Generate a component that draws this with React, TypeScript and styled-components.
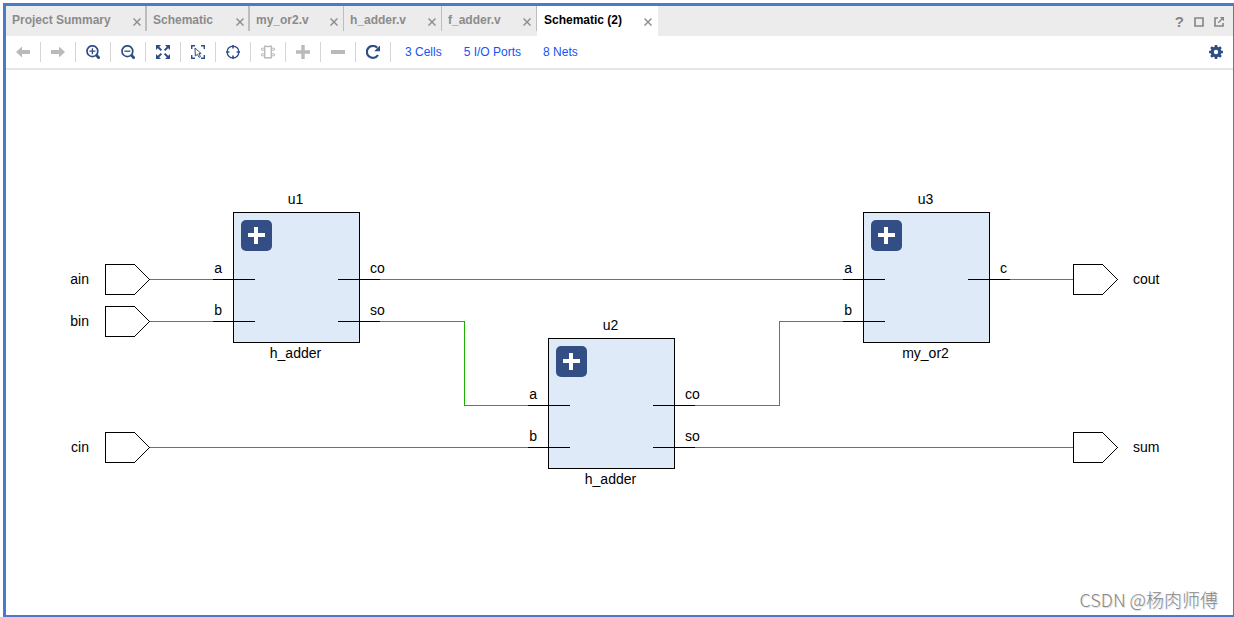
import React from "react";
import styled, { createGlobalStyle } from "styled-components";

const NAVY = "#2f4d86";
const DISABLED = "#bababa";
const WIRE = "#19b000";

const GlobalStyle = createGlobalStyle`
  * { box-sizing: border-box; }
  body {
    margin: 0;
    background: #fff;
    font-family: "Liberation Sans", Arial, sans-serif;
  }
  button {
    margin: 0;
    padding: 0;
    border: 0;
    background: none;
    font: inherit;
    color: inherit;
    cursor: pointer;
  }
  svg { display: block; }
`;

const Page = styled.div`
  display: flex;
  min-height: 100vh;
  padding: 3px 0 0 3px;
`;

const Frame = styled.main`
  flex: 1;
  min-width: 0;
  display: flex;
  flex-direction: column;
  border: 3px solid #4a7bca;
  border-right-width: 1px;
  border-bottom-width: 2px;
`;

const TabBar = styled.header`
  display: flex;
  justify-content: space-between;
  height: 30px;
  background: #ececec;
`;

const TabList = styled.nav`
  display: flex;
`;

const Tab = styled.div<{ $width: number; $divider: number; $active?: boolean }>`
  display: flex;
  align-items: center;
  justify-content: space-between;
  width: ${(p) => p.$width}px;
  padding: 0 6px 2px ${(p) => (p.$active ? 7 : 6)}px;
  color: ${(p) => (p.$active ? "#000" : "#8b8b8b")};
  background: ${(p) =>
    p.$active
      ? "#fff"
      : `linear-gradient(#bdbdbd, #bdbdbd) right top / ${p.$divider}px 25px no-repeat`};
`;

const TabTitle = styled.button`
  font-size: 12px;
  line-height: 16px;
  font-weight: bold;
  white-space: nowrap;
`;

const CloseButton = styled.button`
  padding-top: 4px;
  color: #8f8f8f;
`;

const WindowActions = styled.div`
  display: flex;
  align-items: center;
  gap: 10px;
  padding: 2px 9px 0 0;
  color: #858585;
`;

const HelpButton = styled.button`
  font-size: 15px;
  line-height: 16px;
  font-weight: bold;
`;

const Toolbar = styled.div`
  display: flex;
  align-items: center;
  height: 34px;
  border-bottom: 2px solid #e5e5e5;
`;

const Tool = styled.button`
  display: flex;
  align-items: center;
  justify-content: center;
  width: 35px;
  height: 20px;
  border-right: 1px solid #d6d6d6;
  color: ${NAVY};
  &:disabled {
    color: ${DISABLED};
    cursor: default;
  }
`;

const Stats = styled.div`
  display: flex;
  gap: 22px;
  padding-left: 14px;
`;

const StatLink = styled.a`
  font-size: 12px;
  line-height: 16px;
  color: #1453f5;
  text-decoration: none;
`;

const SettingsButton = styled.button`
  margin-left: auto;
  padding-right: 10px;
  color: ${NAVY};
`;

const Canvas = styled.section`
  position: relative;
  flex: 1;
  min-height: 440px;
  overflow: hidden;
  font-size: 14px;
  line-height: 16px;
  color: #000;
`;

const Wires = styled.svg`
  position: absolute;
  left: 0;
  top: 0;
  width: 100%;
  height: 100%;
`;

const CellBox = styled.div<{ $x: number; $y: number }>`
  position: absolute;
  left: ${(p) => p.$x}px;
  top: ${(p) => p.$y}px;
  width: 127px;
  height: 131px;
  border: 1px solid #000;
  background: #dfeaf8;
`;

const ExpandButton = styled.button`
  display: flex;
  align-items: center;
  justify-content: center;
  width: 31px;
  height: 31px;
  margin: 7px;
  border-radius: 5px;
  background: #324e85;
`;

const CellLabel = styled.span<{ $place: "above" | "below" }>`
  position: absolute;
  left: 0;
  right: 2px;
  ${(p) => (p.$place === "above" ? "bottom: 135px;" : "top: 132px;")}
  text-align: center;
`;

const Pin = styled.span<{ $side: "in" | "out"; $y: number }>`
  position: absolute;
  top: ${(p) => p.$y - 20}px;
  ${(p) => (p.$side === "in" ? "left: -21px;" : "right: -21px;")}
  width: 42px;
  height: 20px;
  border-bottom: 1px solid #000;
`;

const PinName = styled.span<{ $side: "in" | "out" }>`
  position: absolute;
  bottom: 3px;
  ${(p) => (p.$side === "in" ? "right: 33px;" : "left: 32px;")}
`;

const Port = styled.div<{ $x: number; $y: number; $side: "in" | "out" }>`
  position: absolute;
  top: ${(p) => p.$y}px;
  left: ${(p) => p.$x}px;
  display: flex;
  flex-direction: ${(p) => (p.$side === "in" ? "row" : "row-reverse")};
  justify-content: flex-end;
  gap: ${(p) => (p.$side === "in" ? 16 : 15)}px;
  width: 96px;
  line-height: 30px;
  white-space: nowrap;
`;

const Watermark = styled.p`
  position: absolute;
  right: 15px;
  bottom: 4px;
  margin: 0;
  font-family: "Noto Sans CJK SC", sans-serif;
  font-size: 18px;
  line-height: 24px;
  font-weight: 300;
  color: #888;
  text-shadow: 1px 1px 1px #d8d8d8;
`;

const Icon = ({ size = 14, children }: { size?: number; children: React.ReactNode }) => (
  <svg
    width={size}
    height={size}
    viewBox={`0 0 ${size} ${size}`}
    fill="none"
    stroke="currentColor"
    aria-hidden="true"
  >
    {children}
  </svg>
);

const CloseIcon = () => (
  <Icon size={8}>
    <path d="M.5.5l7 7M7.5.5l-7 7" strokeWidth="1.5" />
  </Icon>
);

const tools = [
  {
    label: "Previous",
    disabled: true,
    icon: <path d="M0 7l6-5.5V5h8v4H6v3.5z" fill="currentColor" stroke="none" />,
  },
  {
    label: "Next",
    disabled: true,
    icon: <path d="M14 7L8 1.5V5H0v4h8v3.5z" fill="currentColor" stroke="none" />,
  },
  {
    label: "Zoom In",
    icon: (
      <>
        <circle cx="6.4" cy="6.2" r="5.4" strokeWidth="1.7" />
        <path d="M3.4 6.2h6M6.4 3.2v6" strokeWidth="1.3" />
        <path d="M10.2 10l3.4 3.6" strokeWidth="2.8" />
      </>
    ),
  },
  {
    label: "Zoom Out",
    icon: (
      <>
        <circle cx="6.4" cy="6.2" r="5.4" strokeWidth="1.7" />
        <path d="M3.4 6.2h6" strokeWidth="1.3" />
        <path d="M10.2 10l3.4 3.6" strokeWidth="2.8" />
      </>
    ),
  },
  {
    label: "Zoom Fit",
    icon: (
      <>
        <path
          d="M0 0h5L0 5zM14 0v5L9 0zM0 14V9l5 5zM14 14H9l5-5z"
          fill="currentColor"
          stroke="none"
        />
        <path d="M1.5 1.5L5.4 5.4M12.5 1.5L8.6 5.4M1.5 12.5l3.9-3.9M12.5 12.5L8.6 8.6" strokeWidth="2" />
      </>
    ),
  },
  {
    label: "Select Area",
    icon: (
      <>
        <path d="M.7 4V.7H4M10 .7h3.3V4M13.3 10v3.3H10M4 13.3H.7V10" strokeWidth="1.4" />
        <path d="M4 3l6.2 5.6H7.9l1.6 3-1.5.7-1.5-3L4.3 11z" strokeWidth="1" />
      </>
    ),
  },
  {
    label: "Auto-fit Selection",
    icon: (
      <>
        <circle cx="7" cy="7" r="5.9" strokeWidth="1.3" />
        <path d="M7 0v3.4M7 10.6V14M0 7h3.4M10.6 7H14" strokeWidth="1.6" />
      </>
    ),
  },
  {
    label: "Cell Pins",
    disabled: true,
    icon: (
      <>
        <path d="M3.7 1.2h2q1.3 1 2.6 0h2v11.6H3.7z" strokeWidth="1.4" />
        <path d="M3.5 3.2H.6v2h2.9M3.5 8.8H.6v2h2.9M10.5 3.2h2.9v2h-2.9M10.5 8.8h2.9v2h-2.9" strokeWidth="1" />
      </>
    ),
  },
  {
    label: "Add",
    disabled: true,
    icon: <path d="M7 0v14M0 7h14" strokeWidth="3.4" />,
  },
  {
    label: "Remove",
    disabled: true,
    icon: <path d="M0 7h14" strokeWidth="4" />,
  },
  {
    label: "Reload",
    icon: (
      <>
        <path d="M12 10A6 6 0 1 1 11.2 2.7" strokeWidth="2.2" />
        <path d="M14 .4v5.8H8.2z" fill="currentColor" stroke="none" />
      </>
    ),
  },
];

const tabs = [
  { title: "Project Summary", width: 141, divider: 2 },
  { title: "Schematic", width: 103, divider: 2 },
  { title: "my_or2.v", width: 94, divider: 1 },
  { title: "h_adder.v", width: 98, divider: 1 },
  { title: "f_adder.v", width: 95, divider: 1 },
  { title: "Schematic (2)", width: 121, divider: 0, active: true },
];

type PinSpec = { name: string; y: number };

const cells: {
  id: string;
  module: string;
  x: number;
  y: number;
  inputs: PinSpec[];
  outputs: PinSpec[];
}[] = [
  {
    id: "u1",
    module: "h_adder",
    x: 227,
    y: 142,
    inputs: [{ name: "a", y: 67 }, { name: "b", y: 109 }],
    outputs: [{ name: "co", y: 67 }, { name: "so", y: 109 }],
  },
  {
    id: "u2",
    module: "h_adder",
    x: 542,
    y: 268,
    inputs: [{ name: "a", y: 67 }, { name: "b", y: 109 }],
    outputs: [{ name: "co", y: 67 }, { name: "so", y: 109 }],
  },
  {
    id: "u3",
    module: "my_or2",
    x: 857,
    y: 142,
    inputs: [{ name: "a", y: 67 }, { name: "b", y: 109 }],
    outputs: [{ name: "c", y: 67 }],
  },
];

const ports: { name: string; side: "in" | "out"; x: number; y: number }[] = [
  { name: "ain", side: "in", x: 48, y: 194 },
  { name: "bin", side: "in", x: 48, y: 236 },
  { name: "cin", side: "in", x: 48, y: 362 },
  { name: "cout", side: "out", x: 1067, y: 194 },
  { name: "sum", side: "out", x: 1067, y: 362 },
];

const wires = [
  "M143 209.5H207",
  "M143 251.5H207",
  "M143 377.5H522",
  "M374 209.5H837",
  "M374 251.5H458.5V335.5H522",
  "M689 335.5H773.5V251.5H837",
  "M689 377.5H1067",
  "M1004 209.5H1067",
];

const Cell = ({ cell }: { cell: (typeof cells)[number] }) => (
  <CellBox $x={cell.x} $y={cell.y}>
    <CellLabel $place="above">{cell.id}</CellLabel>
    <ExpandButton aria-label={`Expand ${cell.id}`}>
      <svg width="17" height="17" viewBox="0 0 17 17" stroke="#fff" strokeWidth="4">
        <path d="M8 0v17M0 8h17" />
      </svg>
    </ExpandButton>
    {cell.inputs.map((pin) => (
      <Pin key={pin.name} $side="in" $y={pin.y}>
        <PinName $side="in">{pin.name}</PinName>
      </Pin>
    ))}
    {cell.outputs.map((pin) => (
      <Pin key={pin.name} $side="out" $y={pin.y}>
        <PinName $side="out">{pin.name}</PinName>
      </Pin>
    ))}
    <CellLabel $place="below">{cell.module}</CellLabel>
  </CellBox>
);

export default function App() {
  return (
    <Page>
      <GlobalStyle />
      <Frame>
        <TabBar>
          <TabList>
            {tabs.map((tab) => (
              <Tab key={tab.title} $width={tab.width} $divider={tab.divider} $active={tab.active}>
                <TabTitle>{tab.title}</TabTitle>
                <CloseButton aria-label={`Close ${tab.title}`}>
                  <CloseIcon />
                </CloseButton>
              </Tab>
            ))}
          </TabList>
          <WindowActions>
            <HelpButton aria-label="Help">?</HelpButton>
            <button aria-label="Maximize">
              <Icon size={10}>
                <path d="M1 1h8v8H1z" strokeWidth="1.6" />
              </Icon>
            </button>
            <button aria-label="Float">
              <Icon size={10}>
                <path d="M4 1H1v8h8V6" strokeWidth="1.6" />
                <path d="M4.3 5.7L8 2" strokeWidth="1.4" />
                <path d="M5.8 0H10v4.2z" fill="currentColor" stroke="none" />
              </Icon>
            </button>
          </WindowActions>
        </TabBar>

        <Toolbar>
          {tools.map((tool) => (
            <Tool key={tool.label} aria-label={tool.label} disabled={tool.disabled}>
              <Icon>{tool.icon}</Icon>
            </Tool>
          ))}
          <Stats>
            <StatLink href="#cells">3 Cells</StatLink>
            <StatLink href="#ports">5 I/O Ports</StatLink>
            <StatLink href="#nets">8 Nets</StatLink>
          </Stats>
          <SettingsButton aria-label="Settings">
            <Icon>
              <circle cx="7" cy="7" r="3.8" strokeWidth="3.2" />
              <path
                d="M7 0v2.4M7 11.6V14M0 7h2.4M11.6 7H14M2.05 2.05l1.7 1.7M10.25 10.25l1.7 1.7M11.95 2.05l-1.7 1.7M3.75 10.25l-1.7 1.7"
                strokeWidth="2.6"
              />
            </Icon>
          </SettingsButton>
        </Toolbar>

        <Canvas aria-label="Schematic">
          <Wires fill="none" stroke={WIRE} shapeRendering="crispEdges" aria-hidden="true">
            {wires.map((d) => (
              <path key={d} d={d} />
            ))}
          </Wires>
          {ports.map((port) => (
            <Port key={port.name} $x={port.x} $y={port.y} $side={port.side}>
              <span>{port.name}</span>
              <svg width="45" height="31" viewBox="0 0 45 31" fill="#fff" stroke="#000" aria-hidden="true">
                <path d="M.5.5h29l15 15-15 15H.5z" shapeRendering="crispEdges" />
              </svg>
            </Port>
          ))}
          {cells.map((cell) => (
            <Cell key={cell.id} cell={cell} />
          ))}
          <Watermark>CSDN @杨肉师傅</Watermark>
        </Canvas>
      </Frame>
    </Page>
  );
}
